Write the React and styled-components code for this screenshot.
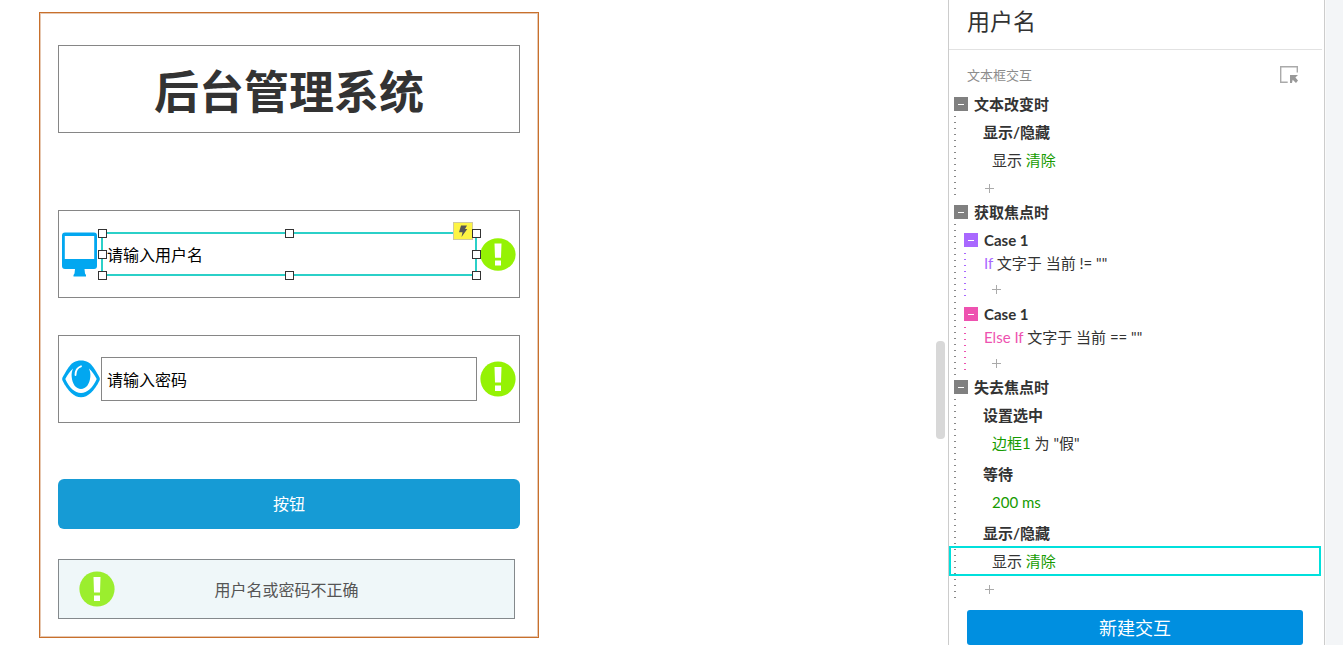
import React, { useState } from 'react';
import styled, { createGlobalStyle, css } from 'styled-components';

const GlobalStyle = createGlobalStyle`
  * {
    box-sizing: border-box;
  }
  body {
    margin: 0;
    background-color: #ffffff;
    color: #333333;
    font-family: "Lato", "Noto Sans CJK SC", sans-serif;
    font-size: 15px;
  }
  button, input {
    font-family: inherit;
  }
`;
const Page = styled.div`
  display: flex;
  min-height: 100vh;
`;

/* canvas */
const Canvas = styled.main`
  position: relative;
  flex: 1;
  min-width: 0;
  padding: 12px 39px 7px;
`;
const ScrollThumb = styled.div`
  position: absolute;
  top: 341px;
  right: 3px;
  width: 9px;
  height: 98px;
  border-radius: 4px;
  background-color: #d8d8d8;
`;
const Artboard = styled.form`
  max-width: 500px;
  display: flex;
  flex-direction: column;
  padding: 32px 18px 18px;
  border: 1px solid #c8702c;
  box-shadow: inset 0 0 0 1px #e6c8b2;
`;
const TitleBox = styled.h1`
  display: flex;
  align-items: center;
  justify-content: center;
  height: 88px;
  margin: 0 0 77px;
  padding-top: 6px;
  border: 1px solid #868686;
  font-size: 45px;
  line-height: 60px;
  font-weight: bold;
`;
const Field = styled.div`
  display: grid;
  grid-template-columns: 42px 1fr 42px;
  align-items: center;
  height: 88px;
  margin-bottom: 37px;
  border: 1px solid #868686;
`;
const FieldLabel = styled.label`
  display: flex;
  padding-left: 3px;
`;
const FieldStatus = styled.div`
  display: flex;
  justify-content: center;
`;
const InputWrap = styled.div`
  position: relative;
  display: flex;
`;
const Input = styled.input`
  width: 100%;
  height: 44px;
  padding: 0 5px;
  border: 1px solid #868686;
  border-radius: 0;
  background-color: #ffffff;
  color: #000000;
  font-size: 16px;
  outline: none;
  ${(props) => props.$selected && css`
    padding: 0 4px;
    border: 2px solid #2bd0c8;
  `}
`;
const Handle = styled.span`
  position: absolute;
  top: ${(props) => props.$top};
  left: ${(props) => props.$left};
  width: 9px;
  height: 9px;
  border: 1px solid #333333;
  background-color: #ffffff;
`;
const EventBadge = styled.span`
  position: absolute;
  top: -10px;
  right: 4px;
  display: flex;
  align-items: center;
  justify-content: center;
  width: 20px;
  height: 18px;
  border: 1px solid #cfcaa0;
  background-color: #fdf444;
`;
const SubmitButton = styled.button`
  height: 50px;
  margin: 19px 0 30px;
  padding: 0 0 2px;
  border: none;
  border-radius: 6px;
  background-color: #169bd5;
  color: #ffffff;
  font-size: 16px;
`;
const Message = styled.div`
  display: grid;
  grid-template-columns: 1fr auto 1fr;
  align-items: center;
  height: 60px;
  margin-right: 5px;
  padding: 0 20px 1px;
  border: 1px solid #84898c;
  background-color: #eff7f9;
  color: #555555;
  font-size: 16px;
  svg {
    display: block;
  }
`;

/* interactions panel */
const Panel = styled.aside`
  flex: 0 0 377px;
  padding-right: 2px;
  border-left: 1px solid #cccccc;
  border-right: 1px solid #cccccc;
`;
const Gutter = styled.div`
  flex: 0 0 18px;
  border-left: 1px solid #fafafa;
  background-color: #f3f5f7;
`;
const PanelTitle = styled.h2`
  height: 50px;
  margin: 0;
  padding-left: 18px;
  border-bottom: 1px solid #e2e2e2;
  font-size: 23px;
  line-height: 43px;
  font-weight: normal;
`;
const SectionHead = styled.div`
  display: flex;
  align-items: center;
  justify-content: space-between;
  height: 36px;
  margin-top: 6px;
  padding: 0 24px 0 18px;
  color: #8c8c8c;
  font-size: 13px;
`;
const IconButton = styled.button`
  display: flex;
  padding: 0;
  border: none;
  background: none;
`;
const Line = styled.div`
  display: flex;
  align-items: center;
  height: ${(props) => props.$height || 24}px;
  padding-left: ${(props) => props.$indent}px;
  gap: 6px;
  line-height: 22px;
  font-weight: ${(props) => (props.$bold ? 'bold' : 'normal')};
`;
const Toggle = styled.button`
  display: flex;
  align-items: center;
  justify-content: center;
  width: 14px;
  height: 14px;
  padding: 0;
  border: none;
  background-color: ${(props) => props.$color};
  &::before {
    content: "";
    width: 6px;
    height: 1px;
    background-color: #ffffff;
  }
`;
const Dotted = styled.div`
  padding-top: ${(props) => props.$top || 0}px;
  background-image: repeating-linear-gradient(
    ${(props) => props.$color} 0 1px,
    transparent 1px 6px
  );
  background-position: ${(props) => props.$x}px 0;
  background-size: 2px 100%;
  background-repeat: no-repeat;
`;
const Actions = styled.div`
  display: flex;
  flex-direction: column;
  gap: 3px;
`;
const Target = styled.div`
  height: 24px;
  padding-left: 43px;
  line-height: 24px;
  ${(props) => props.$selected && css`
    height: 30px;
    margin: -3px 1px -3px 0;
    padding: 1px 0 1px 41px;
    border: 2px solid #00e0dc;
  `}
`;
const Name = styled.span`
  color: #169b00;
`;
const Keyword = styled.span`
  color: ${(props) => props.$color};
`;
const Condition = styled.div`
  height: 22px;
  padding-left: 35px;
  line-height: 20px;
`;
const AddButton = styled.button`
  display: flex;
  align-items: center;
  height: ${(props) => props.$height}px;
  padding: ${(props) => props.$height - 24}px 0 0 ${(props) => props.$indent}px;
  border: none;
  background: none;
`;
const NewButton = styled.button`
  display: block;
  width: calc(100% - 37px);
  height: 35px;
  margin: 9px 19px 0 18px;
  padding: 0;
  border: none;
  border-radius: 3px;
  background-color: #008fe0;
  color: #ffffff;
  font-size: 18px;
  line-height: 34px;
`;

const MonitorIcon = () => (
  <svg width="35" height="45" viewBox="0 0 35 45" fill="#02a7f0" aria-hidden="true">
    <path fillRule="evenodd" d="M3 .5h29a3 3 0 0 1 3 3V34a3 3 0 0 1-3 3h-9.500l.5 4.500 1 1.500v1.500H11.500V43l1-1.500.5-4.500H3a3 3 0 0 1-3-3V3.500a3 3 0 0 1 3-3zM2.800 4v23h29.400V4z" />
  </svg>
);
const EyeIcon = () => (
  <svg width="38" height="38" viewBox="0 0 38 38" aria-hidden="true">
    <path fill="#02a7f0" d="M19 .5c5.500 0 9.500 2.500 12.500 7 2.300 3.500 4.500 7 6 10 .5 1 .5 2 0 3-2.500 5-5.500 9.500-8.800 12.500-3 2.700-6.200 4.300-9.700 4.300s-6.700-1.600-9.700-4.300C6 30 3 25.500.5 20.500c-.5-1-.5-2 0-3 1.500-3 3.700-6.500 6-10C9.500 3 13.500.5 19 .5z" />
    <path fill="#fff" d="M3.300 19C5.500 14.500 8 11.500 11 8.500c-1.200 3-1.600 5.500-1.300 8.500.6 7 4.300 12 9.300 12s8.700-5 9.300-12c.3-3-.1-5.500-1.300-8.500 3 3 5.500 6 7.700 10.500-3.700 8.500-9.500 14-15.700 14S7 27.500 3.300 19z" />
    <path fill="none" stroke="#fff" strokeWidth="1.800" strokeLinecap="round" d="M13.500 15c0-4 2-7.500 5.500-8.700" />
  </svg>
);
const BangIcon = ({ color = '#95f204', height = 36 }) => (
  <svg width="36" height={height} viewBox="0 0 36 36" preserveAspectRatio="none" aria-hidden="true">
    <circle cx="18" cy="18" r="17.600" fill={color} />
    <path fill="#fff" d="M14.500 6h7l-.5 15.500h-6zM15 24.500h6V30h-6z" />
  </svg>
);
const BoltIcon = () => (
  <svg width="10" height="12" viewBox="0 0 10 12" fill="#555" aria-hidden="true">
    <path d="M3 .5h6L7 4h2.300L3.500 12l1-4.800H1z" />
  </svg>
);
const PickIcon = () => (
  <svg width="18" height="17" viewBox="0 0 18 17" aria-hidden="true">
    <path fill="none" stroke="#aaa" strokeWidth="1.400" d="M17.300 6.500V.7H.7v15.600h7" />
    <path fill="#999" d="M10 9h8l-2.600 2.500 2.600 3L16 17l-3.300-3.200-.7 3.200h-2z" />
  </svg>
);
const PlusIcon = () => (
  <svg width="9" height="9" viewBox="0 0 9 9" stroke="#aaa" aria-hidden="true">
    <path d="M4.500 0v9M0 4.500h9" />
  </svg>
);

const events = [
  {
    name: '文本改变时',
    actions: [{ name: '显示/隐藏', before: '显示 ', target: '清除' }],
  },
  {
    name: '获取焦点时',
    cases: [
      { name: 'Case 1', keyword: 'If', test: '文字于 当前 != ""', color: '#a968ff' },
      { name: 'Case 1', keyword: 'Else If', test: '文字于 当前 == ""', color: '#ee52b0' },
    ],
  },
  {
    name: '失去焦点时',
    actions: [
      { name: '设置选中', target: '边框1', after: ' 为 "假"' },
      { name: '等待', target: '200 ms' },
      { name: '显示/隐藏', before: '显示 ', target: '清除', selected: true },
    ],
  },
];

const handles = [
  ['-3px', '-3px'],
  ['-3px', 'calc(50% - 4px)'],
  ['-3px', 'calc(100% - 5px)'],
  ['calc(50% - 4px)', '-3px'],
  ['calc(50% - 4px)', 'calc(100% - 5px)'],
  ['calc(100% - 5px)', '-3px'],
  ['calc(100% - 5px)', 'calc(50% - 4px)'],
  ['calc(100% - 5px)', 'calc(100% - 5px)'],
];

const Case = ({ item }) => (
  <div>
    <Line $height={26} $indent={15} $bold>
      <Toggle type="button" $color={item.color} aria-label="Case" />
      {item.name}
    </Line>
    <Dotted $color={item.color} $x={15}>
      <Condition>
        <Keyword $color={item.color}>{item.keyword}</Keyword> {item.test}
      </Condition>
      <AddButton type="button" $height={26} $indent={43} aria-label="+">
        <PlusIcon />
      </AddButton>
    </Dotted>
  </div>
);

const Action = ({ item }) => (
  <div>
    <Line $height={32} $indent={34} $bold>{item.name}</Line>
    <Target $selected={item.selected}>
      {item.before}
      <Name>{item.target}</Name>
      {item.after}
    </Target>
  </div>
);

function App() {
  const [user, setUser] = useState('请输入用户名');
  const [password, setPassword] = useState('请输入密码');

  const onSubmit = (event) => {
    event.preventDefault();
  }

  return (
    <Page>
      <GlobalStyle />
      <Canvas>
        <Artboard onSubmit={onSubmit}>
          <TitleBox>后台管理系统</TitleBox>
          <Field>
            <FieldLabel htmlFor="user"><MonitorIcon /></FieldLabel>
            <InputWrap>
              <Input
                id="user"
                aria-label="用户名"
                value={user}
                onChange={(event) => setUser(event.target.value)}
                $selected
              />
              <EventBadge><BoltIcon /></EventBadge>
              {handles.map(([top, left]) => (
                <Handle key={top + left} $top={top} $left={left} />
              ))}
            </InputWrap>
            <FieldStatus><BangIcon height={33} /></FieldStatus>
          </Field>
          <Field>
            <FieldLabel htmlFor="password"><EyeIcon /></FieldLabel>
            <InputWrap>
              <Input
                id="password"
                aria-label="密码"
                value={password}
                onChange={(event) => setPassword(event.target.value)}
              />
            </InputWrap>
            <FieldStatus><BangIcon /></FieldStatus>
          </Field>
          <SubmitButton type="submit">按钮</SubmitButton>
          <Message>
            <BangIcon color="#9bee2e" />
            用户名或密码不正确
          </Message>
        </Artboard>
        <ScrollThumb />
      </Canvas>
      <Panel>
        <PanelTitle>用户名</PanelTitle>
        <SectionHead>
          文本框交互
          <IconButton type="button" aria-label="文本框交互"><PickIcon /></IconButton>
        </SectionHead>
        {events.map((event) => (
          <div key={event.name}>
            <Line $indent={5} $bold>
              <Toggle type="button" $color="#808080" aria-label={event.name} />
              {event.name}
            </Line>
            {event.cases ? (
              <Dotted $color="#888888" $x={5} $top={3}>
                {event.cases.map((item) => <Case key={item.keyword} item={item} />)}
              </Dotted>
            ) : (
              <Dotted $color="#888888" $x={5}>
                <Actions>
                  {event.actions.map((item) => <Action key={item.name} item={item} />)}
                </Actions>
                <AddButton type="button" $height={28} $indent={36} aria-label="+">
                  <PlusIcon />
                </AddButton>
              </Dotted>
            )}
          </div>
        ))}
        <NewButton type="button">新建交互</NewButton>
      </Panel>
      <Gutter />
    </Page>
  );
}

export default App;
